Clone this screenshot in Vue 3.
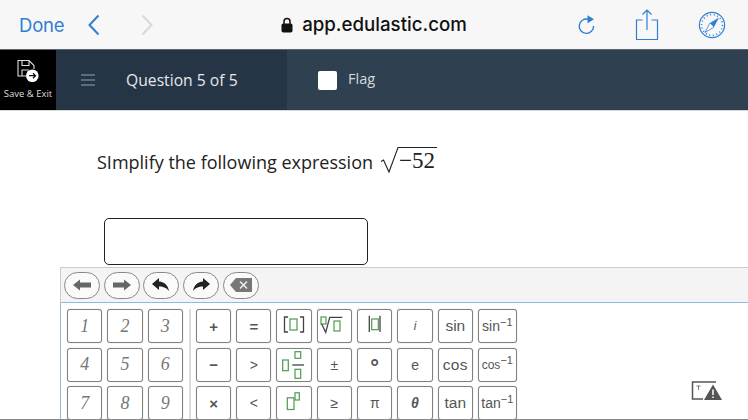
<template>
  <div class="page">
    <header class="browser">
      <div class="browser-left">
        <span class="done">Done</span>
        <svg class="chev" width="14" height="24" viewBox="0 0 14 24"><path d="M11.5 2.500 2.500 12l9 9.500" fill="none" stroke="#2f7fd3" stroke-width="2" /></svg>
        <svg class="chev next" width="14" height="24" viewBox="0 0 14 24"><path d="M2.500 2.500 11.500 12l-9 9.500" fill="none" stroke="#d9d9d9" stroke-width="2" /></svg>
      </div>
      <div class="address">
        <svg width="12" height="16" viewBox="0 0 12 16"><path d="M3 7V4.600a3 3 0 0 1 6 0V7" fill="none" stroke="#111" stroke-width="1.500" /><rect x="0.500" y="6.500" width="11" height="9" rx="1.800" fill="#111" /></svg>
        <span>app.edulastic.com</span>
      </div>
      <div class="browser-right">
        <svg width="20" height="22" viewBox="0 0 20 22"><path d="M12 5.200A7.200 7.200 0 1 0 17.600 12" fill="none" stroke="#2f7fd3" stroke-width="1.400" /><path d="M11.500 1.200 18 5.200l-6.500 4z" fill="#2f7fd3" /></svg>
        <svg width="24" height="32" viewBox="0 0 24 32"><path d="M7.500 11H1.500v19.500h21V11h-6M12 21V1.500M7.500 5.500 12 1l4.500 4.500" fill="none" stroke="#2f7fd3" stroke-width="1.200" /></svg>
        <svg width="28" height="28" viewBox="0 0 28 28"><circle cx="14" cy="14" r="12.600" fill="none" stroke="#2f7fd3" stroke-width="1.200" /><circle cx="14" cy="14" r="10.400" fill="none" stroke="#2f7fd3" stroke-width="1.600" stroke-dasharray="1 2.600" /><path d="M21 6.500 12 12l4 4z" fill="#2f7fd3" /><path d="M7 21.500 12 12l4 4z" fill="#fff" stroke="#2f7fd3" stroke-width="0.800" /></svg>
      </div>
    </header>

    <nav class="topbar">
      <div class="save">
        <svg width="24" height="24" viewBox="0 0 24 24">
          <path d="M10 17H2V1.500h11l5 5v3.500M6 1.500v5h7v-5M6 17v-6h7" fill="none" stroke="#ddd" stroke-width="1.100" />
          <circle cx="16.300" cy="16.700" r="6.300" fill="#fff" />
          <path d="M13 16.700h6.500M17 14.200l2.500 2.500-2.500 2.500" fill="none" stroke="#111" stroke-width="1.300" />
        </svg>
        <span>Save &amp; Exit</span>
      </div>
      <div class="question">
        <div class="burger"><i></i><i></i><i></i></div>
        <span>Question 5 of 5</span>
      </div>
      <div class="flag">
        <div class="check"></div>
        <span>Flag</span>
      </div>
    </nav>

    <main class="content">
      <div class="prompt">
        <span>SImplify the following expression</span>
        <span class="math"><svg class="radical" width="19" height="30" viewBox="0 0 19 30"><path d="M1 16.500 3.500 15 9 27 18 2.500H19" fill="none" stroke="#222" stroke-width="1.100" /></svg><span class="radicand">−52</span></span>
      </div>
      <div class="answer"></div>
    </main>

    <section class="keyboard">
      <div class="history">
        <button v-for="h in history" :key="h.id" class="round">
          <svg width="24" height="16" viewBox="0 0 24 16">
            <path :d="h.d" :fill="h.fill" />
            <path v-if="h.cross" :d="h.cross" fill="none" stroke="#eee" stroke-width="1.500" />
          </svg>
        </button>
      </div>
      <div class="keypad">
        <div class="digits">
          <div v-for="d in digits" :key="d" class="key digit">{{ d }}</div>
        </div>
        <div class="symbols">
          <div v-for="k in symbols" :key="k.id" class="key" :class="k.cls">
            <span v-if="k.sup">{{ k.label }}<sup>−1</sup></span>
            <span v-else-if="k.label">{{ k.label }}</span>
            <svg v-else width="30" height="30" viewBox="0 0 30 30">
              <g fill="none" stroke="#4c9a4c" stroke-width="1.200">
                <rect v-for="(b, i) in k.boxes" :key="i" :x="b[0]" :y="b[1]" :width="b[2]" :height="b[3]" />
              </g>
              <path v-if="k.ink" :d="k.ink" fill="none" stroke="#444" stroke-width="1.300" />
            </svg>
          </div>
        </div>
        <svg class="warn" width="32" height="22" viewBox="0 0 32 22">
          <path d="M26 2H2.500v17H13" fill="none" stroke="#555" stroke-width="1.500" />
          <path d="M6.500 6h4M8.500 6v4" fill="none" stroke="#777" stroke-width="1" />
          <path d="M23 4.500 32 20H14z" fill="#555" />
          <path d="M23 9.500v5.500M23 16.500v1.500" stroke="#fff" stroke-width="1.500" />
        </svg>
      </div>
    </section>
  </div>
</template>

<script setup>
const history = [
  { id: 'left', fill: '#666', d: 'M3 8l7-5.500v3h11v5H10v3z' },
  { id: 'right', fill: '#666', d: 'M21 8l-7-5.500v3H3v5h11v3z' },
  { id: 'undo', fill: '#222', d: 'M3 7l7-6v3.500c6 .5 9 4 10 9.500-2.500-3-5-4.500-10-4.500V13z' },
  { id: 'redo', fill: '#222', d: 'M21 7l-7-6v3.500c-6 .5-9 4-10 9.500 2.500-3 5-4.500 10-4.500V13z' },
  { id: 'del', fill: '#777', d: 'M1 8l6-7h16v14H7z', cross: 'M11 4.500l7 7M18 4.500l-7 7' }
]

const digits = [1, 2, 3, 4, 5, 6, 7, 8, 9]

const symbols = [
  { id: 'plus', label: '+', cls: 'op' },
  { id: 'eq', label: '=', cls: 'op' },
  { id: 'brk', boxes: [[11, 8, 7, 11]], ink: 'M9 6H5.500v15H9M21 6h3.500v15H21' },
  { id: 'nroot', boxes: [[2, 6, 5, 7], [15, 10, 6, 10]], ink: 'M2.700 13l4 8.300 4-15h12.600' },
  { id: 'abs', boxes: [[11.700, 8, 6.600, 10.700]], ink: 'M9.300 4.700V21M20 4.700V21' },
  { id: 'i', label: 'i', cls: 'ital small' },
  { id: 'sin', label: 'sin', cls: 'fn' },
  { id: 'asin', label: 'sin', sup: true, cls: 'afn' },
  { id: 'minus', label: '−', cls: 'op' },
  { id: 'gt', label: '>', cls: 'op thin' },
  { id: 'frac', boxes: [[3.700, 10, 5.600, 10.700], [16, 1.700, 5.700, 6.600], [16, 19.300, 5.700, 9]], ink: 'M13.300 15H25' },
  { id: 'pm', label: '±', cls: 'op thin' },
  { id: 'deg', label: '°', cls: 'op deg' },
  { id: 'e', label: 'e', cls: 'op thin' },
  { id: 'cos', label: 'cos', cls: 'fn wide' },
  { id: 'acos', label: 'cos', sup: true, cls: 'afn tight' },
  { id: 'times', label: '×', cls: 'op' },
  { id: 'lt', label: '<', cls: 'op thin' },
  { id: 'pow', boxes: [[8.300, 9.800, 6.700, 11.700], [16, 4.800, 4.300, 7.200]] },
  { id: 'ge', label: '≥', cls: 'op thin' },
  { id: 'pi', label: 'π', cls: 'op thin' },
  { id: 'theta', label: 'θ', cls: 'ital' },
  { id: 'tan', label: 'tan', cls: 'fn' },
  { id: 'atan', label: 'tan', sup: true, cls: 'afn' }
]
</script>

<style scoped>
.page {
  width: 748px;
  height: 420px;
  box-sizing: border-box;
  overflow: hidden;
  background: #fff;
  border-bottom: 1px solid #8a8a8a;
  font-family: "Open Sans", sans-serif;
  display: flex;
  flex-direction: column;
}

.browser {
  height: 49px;
  flex: none;
  background: #f7f7f7;
  border-bottom: 1px solid #5d6670;
  display: grid;
  grid-template-columns: 1fr auto 1fr;
  align-items: center;
  font-family: Inter, "Liberation Sans", sans-serif;
}

.browser-left {
  display: flex;
  align-items: center;
  padding-left: 19px;
}

.done {
  font-size: 18.500px;
  color: #2f7fd3;
  letter-spacing: -0.2px;
}

.chev {
  margin-left: 23px;
}

.chev.next {
  margin-left: 39px;
}

.address {
  display: flex;
  align-items: center;
  gap: 9px;
  font-size: 18.700px;
  font-weight: 500;
  color: #111;
}

.browser-right {
  display: flex;
  align-items: center;
  justify-content: flex-end;
  gap: 39px;
  padding-right: 22px;
}

.topbar {
  height: 61px;
  flex: none;
  display: flex;
  background: #2f4050;
  border-bottom: 1px solid #d8d8d8;
  box-sizing: border-box;
}

.save {
  width: 56px;
  background: #000;
  color: #ddd;
  font-size: 9.500px;
  display: flex;
  flex-direction: column;
  align-items: center;
  padding-top: 9px;
  gap: 4px;
  white-space: nowrap;
}

.question {
  width: 231px;
  background: #253545;
  color: #e4e8ec;
  font-size: 15.700px;
  display: flex;
  align-items: center;
  gap: 31px;
  padding-left: 25px;
  box-sizing: border-box;
}

.burger {
  width: 14px;
  display: flex;
  flex-direction: column;
  gap: 3px;
}

.burger i {
  height: 2px;
  background: #5c6d7d;
}

.flag {
  display: flex;
  align-items: center;
  gap: 11px;
  padding-left: 31px;
  color: #d5dade;
  font-size: 14.500px;
}

.flag span {
  margin-bottom: 3px;
}

.check {
  width: 19px;
  height: 19px;
  background: #fff;
  border-radius: 2px;
}

.content {
  flex: none;
  height: 156px;
  padding-left: 97px;
  box-sizing: border-box;
}

.prompt {
  display: flex;
  align-items: center;
  gap: 7px;
  height: 30px;
  margin-top: 36px;
  font-size: 18px;
  color: #222;
}

.math {
  display: flex;
  align-items: flex-start;
  align-self: flex-start;
  margin-top: -2px;
  font-family: "Liberation Serif", serif;
  font-size: 23px;
  color: #222;
}

.radical {
  flex: none;
}

.radicand {
  line-height: 25px;
  margin-top: 2px;
  padding-right: 2px;
  border-top: 1px solid #222;
}

.answer {
  width: 262px;
  height: 45px;
  margin: 41px 0 0 7px;
  border: 1px solid #222;
  border-radius: 5px;
}

.keyboard {
  flex: 1;
  min-height: 0;
  overflow: hidden;
  margin-left: 60px;
  background: #fff;
  border-top: 1px solid #ccc;
  display: flex;
  flex-direction: column;
}

.history {
  height: 34px;
  flex: none;
  background: #f4f4f4;
  border-left: 1px solid #ccc;
  border-bottom: 1px solid #8fbbdd;
  display: flex;
  align-items: center;
  gap: 3.700px;
  padding-left: 3px;
}

.round {
  width: 36px;
  height: 27px;
  padding: 0;
  border: 1px solid #888;
  border-radius: 14px;
  background: #fafafa;
  display: flex;
  align-items: center;
  justify-content: center;
}

.keypad {
  flex: 1;
  display: flex;
  border-left: 1px solid #8fbbdd;
  padding: 6px 0 0 6px;
}

.digits,
.symbols {
  display: grid;
  grid-auto-rows: 34px;
  column-gap: 5px;
  row-gap: 4.500px;
}

.digits {
  grid-template-columns: repeat(3, 35.300px);
  padding-right: 6px;
  border-right: 2px solid #ddd;
  margin-right: 5px;
}

.symbols {
  grid-template-columns: repeat(7, 35.300px) 38.700px;
}

.key {
  box-sizing: border-box;
  border: 1px solid #808080;
  border-radius: 3px;
  background: #fff;
  box-shadow: 0 0 1px rgba(0, 0, 0, 0.35);
  display: flex;
  align-items: center;
  justify-content: center;
  color: #555;
  font-family: "Liberation Sans", sans-serif;
  font-size: 14px;
  white-space: nowrap;
}

.digit {
  font-family: "Liberation Serif", serif;
  font-style: italic;
  font-size: 18px;
  color: #777;
}

.op {
  font-size: 15px;
  font-weight: 700;
  color: #555;
}

.op.thin {
  font-size: 14px;
  font-weight: 400;
}

.op.deg {
  font-size: 22px;
  line-height: 1;
}

.op.deg span {
  margin-top: 6px;
}

.ital {
  font-style: italic;
  font-size: 14px;
  font-weight: 700;
}

.small {
  font-size: 12px;
  font-weight: 400;
}

.fn {
  font-size: 15.500px;
}

.wide {
  letter-spacing: 0.3px;
}

.afn {
  font-size: 14px;
}

.afn.tight {
  font-size: 12px;
}

.afn sup {
  font-size: 11px;
  line-height: 0;
  vertical-align: 5px;
}

.warn {
  margin: 71px 0 0 173px;
  flex: none;
}
</style>

<style>
body {
  margin: 0;
}
</style>
